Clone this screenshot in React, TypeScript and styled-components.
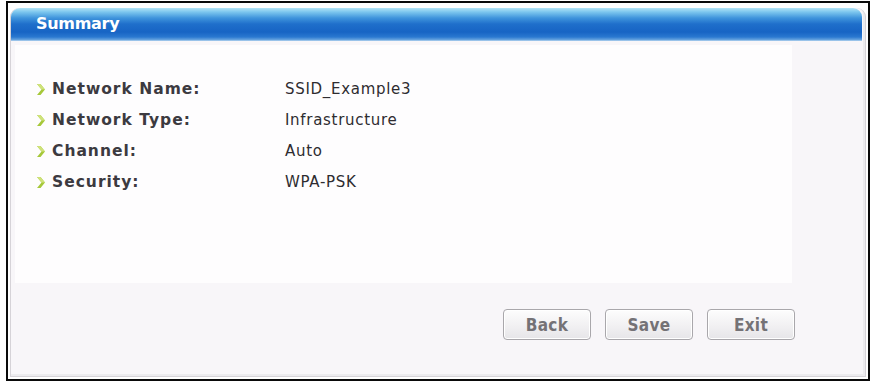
import React from "react";
import styled, { createGlobalStyle } from "styled-components";

const Global = createGlobalStyle`
  html, body { margin: 0; padding: 0; background: #ffffff; }
  body { width: 873px; height: 381px; overflow: hidden; font-family: "DejaVu Sans", Verdana, sans-serif; }
`;

const Frame = styled.div`
  box-sizing: border-box;
  margin: 1px 0 0 6px;
  width: 864px;
  height: 380px;
  border: 2px solid #0a0a0a;
  padding: 5px 2px 2px 2px;
  background: #ffffff;
  display: flex;
`;

const Panel = styled.div`
  flex: 1;
  display: flex;
  flex-direction: column;
  border: 1px solid #d6d3d8;
  border-top: none;
  border-radius: 9px 9px 0 0;
  background: #f8f6f9;
  box-shadow: inset -2px -2px 0 #ecebee;
`;

const Header = styled.div`
  height: 33px;
  margin: 0 3px 0 0;
  border-radius: 9px 9px 0 0;
  background: linear-gradient(
    to bottom,
    #b4e4f6 0px,
    #7cc6ee 4px,
    #3f94dc 10px,
    #1f6fcb 16px,
    #1764c4 24px,
    #2a78d0 29px,
    #6aa6e0 32px,
    #c8dff3 33px
  );
  display: flex;
  align-items: center;
  padding-left: 25px;
  padding-bottom: 3px;
  box-sizing: border-box;
`;

const Title = styled.span`
  color: #ffffff;
  font-family: "DejaVu Sans", Verdana, sans-serif;
  font-weight: bold;
  font-size: 16px;
  letter-spacing: -0.3px;
`;

const Body = styled.div`
  flex: 1;
  display: flex;
  flex-direction: column;
`;

const Content = styled.div`
  margin: 4px 73px 0 4px;
  height: 238px;
  background: #fefdfe;
  padding-top: 35px;
  box-sizing: border-box;
  display: flex;
  flex-direction: column;
  gap: 13px;
`;

const Row = styled.div`
  display: flex;
  align-items: center;
  height: 18px;
  padding-left: 22px;
`;

const Label = styled.div`
  width: 248px;
  display: flex;
  align-items: center;
  gap: 7px;
  color: #3c3a40;
  font-family: "DejaVu Sans", sans-serif;
  font-weight: bold;
  font-size: 15.5px;
  letter-spacing: 1px;
`;

const Value = styled.div`
  color: #2e2c30;
  font-family: "DejaVu Sans", sans-serif;
  font-size: 15px;
  letter-spacing: 0.7px;
`;

const Buttons = styled.div`
  display: flex;
  justify-content: flex-end;
  gap: 14px;
  margin: 26px 70px 0 0;
`;

const Button = styled.button`
  width: 88px;
  height: 31px;
  border: 1px solid #a9a7ab;
  border-radius: 4px;
  background: linear-gradient(to bottom, #fdfdfd 0%, #f0eff1 60%, #e6e5e8 100%);
  box-shadow: inset 0 0 0 1px #ffffff;
  color: #747276;
  font-family: "DejaVu Sans Condensed", "DejaVu Sans", sans-serif;
  font-weight: bold;
  font-size: 17px;
  letter-spacing: 0.3px;
  padding: 0;
`;

const Arrow = () => (
  <svg width="8" height="11" viewBox="0 0 8 11">
    <polygon points="0,0 3.5,0 8,5.5 3.5,11 0,11 4.5,5.5" fill="#a6c83a" />
    <polygon points="0,0 3.5,0 8,5.5 4.5,5.5" fill="#cfe27a" />
  </svg>
);

const rows: [string, string][] = [
  ["Network Name:", "SSID_Example3"],
  ["Network Type:", "Infrastructure"],
  ["Channel:", "Auto"],
  ["Security:", "WPA-PSK"],
];

export default function App() {
  return (
    <>
      <Global />
      <Frame>
        <Panel>
          <Header>
            <Title>Summary</Title>
          </Header>
          <Body>
            <Content>
              {rows.map(([k, v]) => (
                <Row key={k}>
                  <Label>
                    <Arrow />
                    {k}
                  </Label>
                  <Value>{v}</Value>
                </Row>
              ))}
            </Content>
            <Buttons>
              <Button>Back</Button>
              <Button>Save</Button>
              <Button>Exit</Button>
            </Buttons>
          </Body>
        </Panel>
      </Frame>
    </>
  );
}
